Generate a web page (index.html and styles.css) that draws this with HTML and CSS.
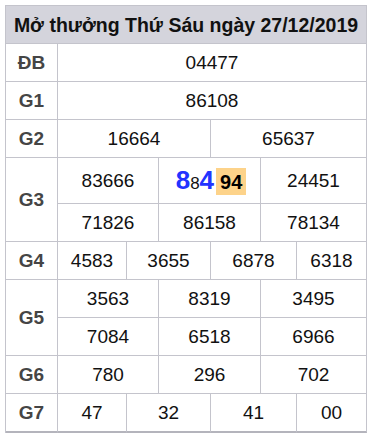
FILE: index.html
```html
<!DOCTYPE html>
<html lang="vi">
<head>
<meta charset="utf-8">
<title>Kết quả xổ số</title>
<link rel="stylesheet" href="styles.css">
</head>
<body>
<div class="kq">
  <div class="cell title">Mở thưởng Thứ Sáu ngày 27/12/2019</div>

  <div class="cell lbl">ĐB</div>
  <div class="cell num c-all">04477</div>

  <div class="cell lbl">G1</div>
  <div class="cell num c-all">86108</div>

  <div class="cell lbl">G2</div>
  <div class="cell num h2a">16664</div>
  <div class="cell num h2b">65637</div>

  <div class="cell lbl tall g3">G3</div>
  <div class="cell num t3a">83666</div>
  <div class="cell num t3b special">
    <span class="big">8</span><span class="small">8</span><span class="big">4</span><span class="hit">94</span>
  </div>
  <div class="cell num t3c">24451</div>
  <div class="cell num t3a">71826</div>
  <div class="cell num t3b">86158</div>
  <div class="cell num t3c">78134</div>

  <div class="cell lbl">G4</div>
  <div class="cell num q4a">4583</div>
  <div class="cell num q4b">3655</div>
  <div class="cell num q4c">6878</div>
  <div class="cell num q4d">6318</div>

  <div class="cell lbl tall">G5</div>
  <div class="cell num t3a">3563</div>
  <div class="cell num t3b">8319</div>
  <div class="cell num t3c">3495</div>
  <div class="cell num t3a">7084</div>
  <div class="cell num t3b">6518</div>
  <div class="cell num t3c">6966</div>

  <div class="cell lbl">G6</div>
  <div class="cell num t3a">780</div>
  <div class="cell num t3b">296</div>
  <div class="cell num t3c">702</div>

  <div class="cell lbl last">G7</div>
  <div class="cell num q4a last">47</div>
  <div class="cell num q4b last">32</div>
  <div class="cell num q4c last">41</div>
  <div class="cell num q4d last">00</div>
</div>
</body>
</html>
```

FILE: styles.css
```css
html, body {
  margin: 0;
  padding: 0;
  background: #ffffff;
}

body {
  padding: 5px;
  font-family: "Liberation Sans", Arial, sans-serif;
}

.kq {
  display: grid;
  width: 362px;
  box-sizing: border-box;
  border-left: 1px solid #c4c4cc;
  border-top: 1px solid #c4c4cc;
  grid-template-columns: 52px 69px 32px 52px 50px 36px 70px;
  grid-template-rows: 38px 38px 38px 38px 46px 38px 38px 38px 38px 38px 39px;
}

.cell {
  box-sizing: border-box;
  border-right: 1px solid #c4c4cc;
  border-bottom: 1px solid #c4c4cc;
  display: flex;
  align-items: center;
  justify-content: center;
  color: #111;
}

.title {
  grid-column: 1 / -1;
  background: #d4d4dc;
  font-weight: bold;
  font-size: 19.5px;
  color: #111;
  padding-top: 1px;
}

.lbl {
  grid-column: 1;
  font-weight: bold;
  font-size: 19px;
  color: #454545;
  padding-top: 1px;
}

.tall {
  grid-row: span 2;
}

.num {
  font-size: 19px;
  padding-top: 1px;
}

.c-all { grid-column: 2 / -1; }
.h2a { grid-column: 2 / 5; }
.h2b { grid-column: 5 / 8; }
.t3a { grid-column: 2 / 4; }
.t3b { grid-column: 4 / 6; }
.t3c { grid-column: 6 / 8; }
.q4a { grid-column: 2 / 3; }
.q4b { grid-column: 3 / 5; }
.q4c { grid-column: 5 / 7; }
.q4d { grid-column: 7 / 8; }

.last {
  border-bottom: 2px solid #b4b4bc;
}

.special {
  align-items: baseline;
  line-height: 1;
  padding-top: 9px;
  padding-left: 3px;
}

.big {
  color: #2233ff;
  font-weight: bold;
  font-size: 26px;
}

.small {
  font-size: 17px;
  color: #111;
}

.hit {
  margin-left: 2px;
  background: #fdd38a;
  font-weight: bold;
  font-size: 20px;
  color: #000;
  padding: 4px 4px 3px;
}
```
